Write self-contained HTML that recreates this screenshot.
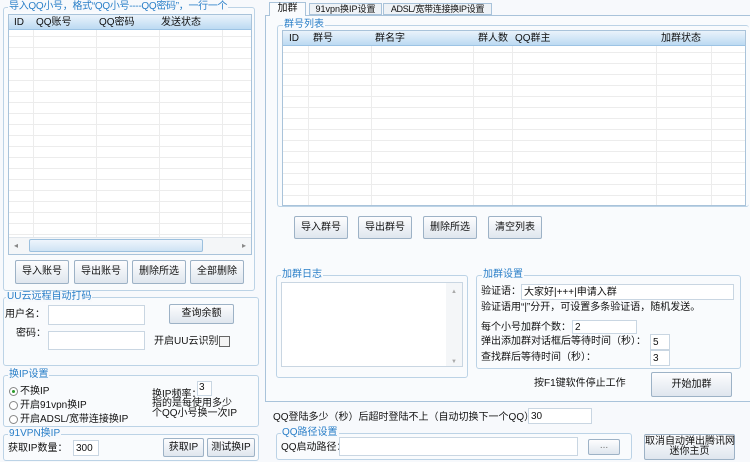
<!DOCTYPE html>
<html><head><meta charset="utf-8"><style>
*{box-sizing:border-box;margin:0;padding:0}
body{width:750px;height:462px;background:#f7f9fc;font-family:"Liberation Sans","Noto Sans CJK SC",sans-serif;font-size:10px;line-height:11px;color:#111;position:relative;overflow:hidden}
.a{position:absolute}
.gb{position:absolute;border:1px solid #bcd3e6;border-radius:3px;background:#f9fbfd}
.tt{position:absolute;color:#2a7fc8;background:#f7f9fc;padding:0 1px;font-size:10px;line-height:11px;white-space:nowrap}
.btn{position:absolute;border:1px solid #9db2c6;border-radius:2px;background:linear-gradient(#fdfdfe,#dfe6ee);text-align:center;font-size:10px;white-space:nowrap}
.inp{position:absolute;background:#fff;border:1px solid #c9d6e2;line-height:11px}
.list{position:absolute;background:#fff;border:1px solid #a9c3da;overflow:hidden}
.hd{position:absolute;left:0;right:0;top:0;height:15px;background:linear-gradient(#eaf3fb,#bcdaf2);border-bottom:1px solid #9cc3e4}
.hd span{position:absolute;top:2px;font-size:10px;line-height:11px;white-space:nowrap}
.vl{position:absolute;top:15px;bottom:0;width:1px;background:#ececec}
.t{position:absolute;white-space:nowrap;font-size:10px;line-height:11px}
</style></head><body>

<div class="gb" style="left:3px;top:7px;width:252px;height:284px"></div>
<div class="tt" style="left:8px;top:1px;letter-spacing:-0.3px">导入QQ小号，格式“QQ小号----QQ密码”，一行一个</div>
<div class="list" style="left:8px;top:14px;width:244px;height:241px;background:repeating-linear-gradient(#fff 0,#fff 10px,#ececec 10px,#ececec 11px);">
 <div class="hd"><span style="left:5px">ID</span><span style="left:27px">QQ账号</span><span style="left:90px">QQ密码</span><span style="left:152px">发送状态</span></div>
 <div class="vl" style="left:24px"></div><div class="vl" style="left:87px"></div><div class="vl" style="left:150px"></div><div class="vl" style="left:213px"></div>
 <div class="a" style="left:0;right:0;bottom:0;height:17px;background:#f4f6f8;border-top:1px solid #e0e6ec"></div>
 <div class="a" style="left:20px;width:174px;bottom:2px;height:13px;background:linear-gradient(#eef5fc,#cfe3f4);border:1px solid #9cc0de;border-radius:2px"></div>
 <div class="a" style="left:5px;bottom:3px;color:#888;font-size:8px">◂</div>
 <div class="a" style="right:5px;bottom:3px;color:#888;font-size:8px">▸</div>
</div>
<div class="btn" style="left:15px;top:260px;width:54px;height:24px;line-height:22px">导入账号</div>
<div class="btn" style="left:74px;top:260px;width:54px;height:24px;line-height:22px">导出账号</div>
<div class="btn" style="left:132px;top:260px;width:54px;height:24px;line-height:22px">删除所选</div>
<div class="btn" style="left:190px;top:260px;width:54px;height:24px;line-height:22px">全部删除</div>

<div class="gb" style="left:3px;top:297px;width:256px;height:69px"></div>
<div class="tt" style="left:6px;top:291px">UU云远程自动打码</div>
<div class="t" style="left:5px;top:309px">用户名：</div>
<div class="inp" style="left:48px;top:305px;width:97px;height:20px"></div>
<div class="t" style="left:16px;top:328px">密码：</div>
<div class="inp" style="left:48px;top:331px;width:97px;height:19px"></div>
<div class="btn" style="left:169px;top:304px;width:65px;height:20px;line-height:18px">查询余额</div>
<div class="t" style="left:154px;top:336px">开启UU云识别</div>
<div class="a" style="left:219px;top:336px;width:11px;height:11px;border:1px solid #666;background:#f4f4f4"></div>

<div class="gb" style="left:3px;top:375px;width:256px;height:52px"></div>
<div class="tt" style="left:8px;top:369px">换IP设置</div>
<div class="a" style="left:9px;top:387px;width:9px;height:9px;border:1px solid #888;border-radius:50%;background:#fff"><div class="a" style="left:2px;top:2px;width:3px;height:3px;border-radius:50%;background:#2a9a2a"></div></div>
<div class="t" style="left:20px;top:386px">不换IP</div>
<div class="a" style="left:9px;top:401px;width:9px;height:9px;border:1px solid #888;border-radius:50%;background:#fff"></div>
<div class="t" style="left:20px;top:400px">开启91vpn换IP</div>
<div class="a" style="left:9px;top:415px;width:9px;height:9px;border:1px solid #888;border-radius:50%;background:#fff"></div>
<div class="t" style="left:20px;top:414px">开启ADSL/宽带连接换IP</div>
<div class="t" style="left:152px;top:389px">换IP频率：</div>
<div class="inp" style="left:197px;top:381px;width:15px;height:15px;font-size:10px;padding-left:1px">3</div>
<div class="t" style="left:152px;top:399px;line-height:10px">指的是每使用多少</div>
<div class="t" style="left:152px;top:409px;line-height:10px">个QQ小号换一次IP</div>

<div class="gb" style="left:3px;top:434px;width:256px;height:27px"></div>
<div class="tt" style="left:8px;top:428px">91VPN换IP</div>
<div class="t" style="left:8px;top:443px">获取IP数量：</div>
<div class="inp" style="left:73px;top:440px;width:26px;height:16px;padding:2px">300</div>
<div class="btn" style="left:163px;top:438px;width:41px;height:19px;line-height:17px">获取IP</div>
<div class="btn" style="left:207px;top:438px;width:48px;height:19px;line-height:17px">测试换IP</div>

<div class="a" style="left:265px;top:15px;width:486px;height:387px;border:1px solid #a9c3da;background:#f9fbfd"></div>
<div class="a" style="left:269px;top:2px;width:37px;height:14px;background:#f9fbfd;border:1px solid #a9c3da;border-bottom:none;text-align:center;line-height:12px">加群</div>
<div class="a" style="left:309px;top:3px;width:73px;height:12px;background:#eef2f6;border:1px solid #a9c3da;text-align:center;line-height:11px;font-size:9px;white-space:nowrap;overflow:hidden">91vpn换IP设置</div>
<div class="a" style="left:383px;top:3px;width:109px;height:12px;background:#eef2f6;border:1px solid #a9c3da;text-align:center;line-height:11px;font-size:9px;white-space:nowrap;overflow:hidden;letter-spacing:-0.3px">ADSL/宽带连接换IP设置</div>

<div class="gb" style="left:277px;top:25px;width:472px;height:182px;border-right:none"></div>
<div class="tt" style="left:283px;top:19px;background:#f9fbfd">群号列表</div>
<div class="list" style="left:282px;top:30px;width:464px;height:176px;background:repeating-linear-gradient(#fff 0,#fff 10px,#ececec 10px,#ececec 11px)">
 <div class="hd"><span style="left:6px">ID</span><span style="left:30px">群号</span><span style="left:92px">群名字</span><span style="left:195px">群人数</span><span style="left:232px">QQ群主</span><span style="left:378px">加群状态</span></div>
 <div class="vl" style="left:25px"></div><div class="vl" style="left:88px"></div><div class="vl" style="left:190px"></div><div class="vl" style="left:229px"></div><div class="vl" style="left:373px"></div><div class="vl" style="left:428px"></div>
</div>
<div class="btn" style="left:294px;top:216px;width:54px;height:23px;line-height:21px">导入群号</div>
<div class="btn" style="left:358px;top:216px;width:54px;height:23px;line-height:21px">导出群号</div>
<div class="btn" style="left:423px;top:216px;width:54px;height:23px;line-height:21px">删除所选</div>
<div class="btn" style="left:488px;top:216px;width:54px;height:23px;line-height:21px">清空列表</div>

<div class="gb" style="left:276px;top:275px;width:192px;height:103px"></div>
<div class="tt" style="left:281px;top:269px;background:#f9fbfd">加群日志</div>
<div class="a" style="left:281px;top:282px;width:182px;height:85px;background:#fff;border:1px solid #c9d6e2"></div>
<div class="a" style="left:446px;top:283px;width:16px;height:83px;background:#f4f6f8"></div>
<div class="a" style="left:451px;top:287px;font-size:6px;color:#aaa">▲</div>
<div class="a" style="left:451px;top:357px;font-size:6px;color:#aaa">▼</div>

<div class="gb" style="left:476px;top:275px;width:265px;height:94px"></div>
<div class="tt" style="left:482px;top:269px;background:#f9fbfd">加群设置</div>
<div class="t" style="left:481px;top:286px">验证语：</div>
<div class="inp" style="left:521px;top:284px;width:213px;height:16px;padding:2px 2px;font-size:10px">大家好|+++|申请入群</div>
<div class="t" style="left:481px;top:302px">验证语用“|”分开，可设置多条验证语，随机发送。</div>
<div class="t" style="left:481px;top:322px">每个小号加群个数：</div>
<div class="inp" style="left:572px;top:320px;width:65px;height:14px;padding:1px 2px">2</div>
<div class="t" style="left:481px;top:336px">弹出添加群对话框后等待时间（秒）：</div>
<div class="inp" style="left:650px;top:334px;width:20px;height:16px;padding:2px 2px">5</div>
<div class="t" style="left:481px;top:352px">查找群后等待时间（秒）：</div>
<div class="inp" style="left:650px;top:350px;width:20px;height:16px;padding:2px 2px">3</div>

<div class="t" style="left:534px;top:378px">按F1键软件停止工作</div>
<div class="btn" style="left:651px;top:372px;width:81px;height:25px;line-height:23px">开始加群</div>

<div class="t" style="left:273px;top:412px">QQ登陆多少（秒）后超时登陆不上（自动切换下一个QQ）：</div>
<div class="inp" style="left:528px;top:408px;width:64px;height:16px;padding:2px 2px">30</div>

<div class="gb" style="left:276px;top:433px;width:356px;height:27px"></div>
<div class="tt" style="left:281px;top:427px">QQ路径设置</div>
<div class="t" style="left:281px;top:442px">QQ启动路径：</div>
<div class="inp" style="left:339px;top:437px;width:239px;height:19px"></div>
<div class="btn" style="left:588px;top:439px;width:32px;height:16px;line-height:12px;color:#777">...</div>
<div class="btn" style="left:644px;top:434px;width:91px;height:26px;line-height:10px;padding-top:2px">取消自动弹出腾讯网<br>迷你主页</div>
</body></html>
